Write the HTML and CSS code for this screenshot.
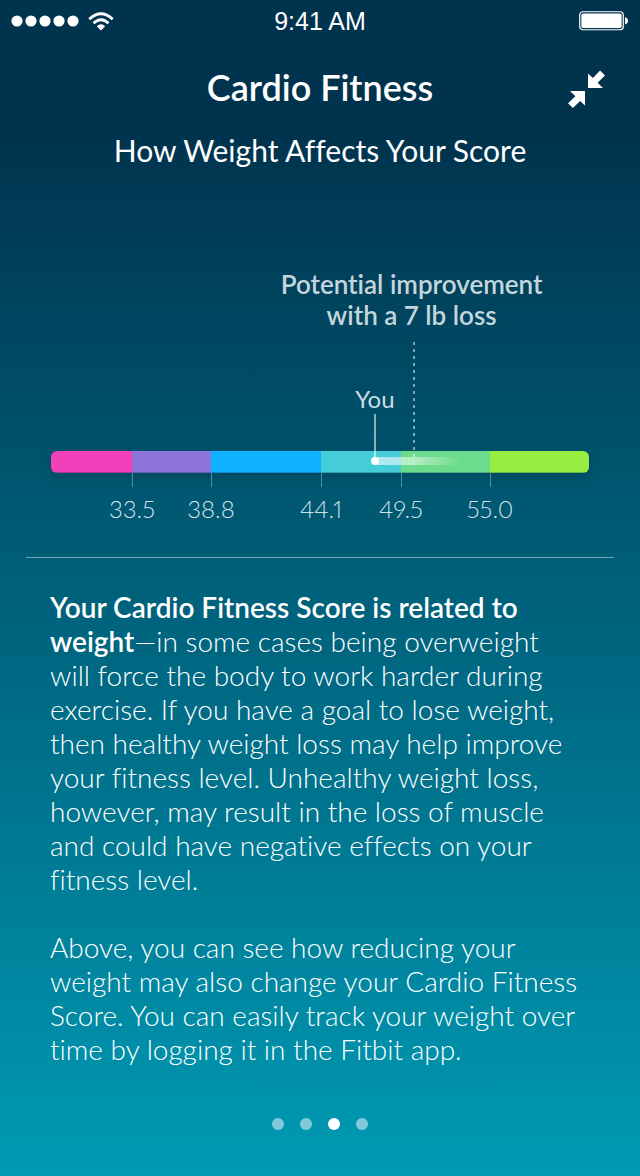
FILE: index.html
```html
<!DOCTYPE html>
<html lang="en">
<head>
<meta charset="utf-8">
<meta name="viewport" content="width=device-width, initial-scale=1">
<title>Cardio Fitness</title>
<link rel="stylesheet" href="styles.css">
</head>
<body>
<div class="screen">
  <div class="status">
    <div class="signal">
      <svg width="68" height="12" viewBox="0 0 68 12" fill="#fff" aria-hidden="true"><circle cx="6" cy="6" r="5.6"/><circle cx="20" cy="6" r="5.6"/><circle cx="34" cy="6" r="5.6"/><circle cx="48" cy="6" r="5.6"/><circle cx="62" cy="6" r="5.6"/></svg>
      <svg width="26" height="19" viewBox="0 0 26 19" fill="none" stroke="#fff" stroke-width="2.8" aria-hidden="true"><path d="M1.3 7.2Q13-3.8 24.7 7.2M5.5 11.2Q13 4.2 20.5 11.2"/><path d="M8.8 14.2Q13 10.4 17.2 14.2L13 18.5Z" fill="#fff" stroke="none"/></svg>
    </div>
    <time class="clock">9:41 AM</time>
    <svg class="battery" width="50" height="20" viewBox="0 0 50 20" aria-label="Battery full" role="img"><rect x=".75" y=".75" width="43.5" height="18" rx="3" fill="none" stroke="#fff" stroke-width="1.2"/><rect x="2.4" y="2.4" width="40.2" height="14.7" rx="1.5" fill="#fff"/><path d="M46 6.2Q49 7 49 9.8T46 13.4Z" fill="#fff"/></svg>
  </div>

  <header class="header">
    <h1 class="title">Cardio Fitness</h1>
    <button class="collapse" type="button" aria-label="Collapse">
      <svg width="38" height="38" viewBox="0 0 38 38" fill="#fff" aria-hidden="true"><path d="M20 3.5V18H35L29.6 12.7 37 5.4 32.1.6 24.9 7.9Z"/><path d="M17 35.5V21H2L7.4 26.3 0 33.2 4.9 38 12.1 31.1Z"/></svg>
    </button>
  </header>
  <h2 class="subtitle">How Weight Affects Your Score</h2>

  <section class="chart">
    <p class="potential">Potential improvement<br>with a 7 lb loss</p>
    <div class="plot">
      <div class="bar">
        <span class="pink"></span><span class="purple"></span><span class="blue"></span><span class="teal"></span><span class="green"></span><span class="lime"></span>
      </div>
      <div class="labels">
        <span>33.5</span><span>38.8</span><span>44.1</span><span>49.5</span><span>55.0</span>
      </div>
      <div class="trail"></div>
      <div class="goal"></div>
      <div class="you"><span>You</span><i class="stem"></i><i class="dot"></i></div>
    </div>
  </section>

  <main class="copy">
    <p><strong>Your Cardio Fitness Score is related to weight</strong>—in some cases being overweight will force the body to work harder during exercise. If you have a goal to lose weight, then healthy weight loss may help improve your fitness level. Unhealthy weight loss, however, may result in the loss of muscle and could have negative effects on your fitness level.</p>
    <p>Above, you can see how reducing your weight may also change your Cardio Fitness Score. You can easily track your weight over time by logging it in the Fitbit app.</p>
  </main>

  <nav class="pages" aria-label="Pages">
    <button type="button" aria-label="Page 1"></button>
    <button type="button" aria-label="Page 2"></button>
    <button type="button" aria-label="Page 3" aria-current="page"></button>
    <button type="button" aria-label="Page 4"></button>
  </nav>
</div>
</body>
</html>
```

FILE: styles.css
```css
* { box-sizing: border-box; }
body, h1, h2, p { margin: 0; }
body {
  font-family: Lato, "Open Sans", sans-serif;
  font-variant-ligatures: none;
  color: #fff;
  background: #009ab4;
}
button { border: 0; padding: 0; background: none; cursor: pointer; }
svg { display: block; }

.screen {
  min-height: 100vh;
  display: flex;
  flex-direction: column;
  background: linear-gradient(#00334d 0, #00344e 12%, #009ab4 100%);
}

.status {
  display: grid;
  grid-template-columns: 1fr auto 1fr;
  align-items: center;
  height: 42px;
  padding: 0 11px;
}
.signal { display: flex; align-items: center; gap: 9px; }
.clock { font: 25px/42px "Liberation Sans", sans-serif; }
.battery { justify-self: end; }

.header {
  display: grid;
  grid-template-columns: 1fr auto 1fr;
  align-items: center;
  height: 92px;
  padding: 0 34px;
}
.title { grid-column: 2; padding-bottom: 2px; font-size: 36px; line-height: 44px; font-weight: 600; }
.collapse { justify-self: end; padding-top: 2px; color: #fff; }
.subtitle { font-size: 30px; line-height: 32px; font-weight: 400; text-align: center; }

.chart {
  margin: 0 26px;
  padding: 103px 25px 33px;
  border-bottom: 1px solid rgba(255, 255, 255, .45);
}
.potential {
  width: 280px;
  margin-left: 41%;
  font-size: 26px;
  line-height: 31px;
  font-weight: 600;
  text-align: center;
  color: #c5d5dc;
}
.plot { position: relative; margin-top: 120px; }
.bar, .labels {
  display: grid;
  grid-template-columns: 81fr 79fr 110fr 80fr 89fr 99fr;
}
.bar {
  height: 22px;
  border-radius: 6px;
  overflow: hidden;
  box-shadow: 0 2px 10px rgba(0, 40, 60, .35);
}
.bar span { border-bottom: 1px solid rgba(0, 60, 90, .3); }
.pink { background: #f040ba; }
.purple { background: #8c74d8; }
.blue { background: #10b2ff; }
.teal { background: #44ccd8; }
.green { background: #6cdc8c; }
.lime { background: #98ee40; }
.labels span {
  justify-self: end;
  width: 80px;
  margin-right: -40px;
  font-size: 24px;
  line-height: 30px;
  font-weight: 300;
  font-variant-numeric: proportional-nums;
  text-align: center;
  color: #d0e2e8;
}
.labels span::before {
  content: "";
  display: block;
  width: 1px;
  height: 14px;
  margin: 0 auto 7px;
  background: rgba(255, 255, 255, .35);
}
.trail {
  position: absolute;
  top: 6px;
  left: 60%;
  width: 16%;
  height: 8px;
  background: linear-gradient(90deg, rgba(255, 255, 255, .6), rgba(255, 255, 255, .5) 45%, transparent);
}
.goal {
  position: absolute;
  top: -109px;
  left: 67.3%;
  width: 2px;
  height: 115px;
  background: repeating-linear-gradient(rgba(255, 255, 255, .5) 0 3px, transparent 3px 7px);
}
.you {
  position: absolute;
  top: -67px;
  left: 60.2%;
  width: 60px;
  margin-left: -30px;
  display: flex;
  flex-direction: column;
  align-items: center;
  font-size: 24px;
  line-height: 30px;
  color: #ccdce2;
}
.stem { width: 2px; height: 44px; background: rgba(255, 255, 255, .55); }
.dot { width: 8px; height: 8px; margin-top: -1px; border-radius: 50%; background: #fff; }

.copy {
  padding: 32px 56px 0 50px;
  font-size: 28px;
  line-height: 34px;
  font-weight: 300;
}
.copy strong { font-weight: 600; }
.copy p + p { margin-top: 34px; }

.pages {
  display: flex;
  justify-content: center;
  gap: 16px;
  margin-top: auto;
  padding: 30px 0 46px;
}
.pages button { width: 12px; height: 12px; border-radius: 50%; background: rgba(255, 255, 255, .5); }
.pages button[aria-current] { background: #fff; }
```
